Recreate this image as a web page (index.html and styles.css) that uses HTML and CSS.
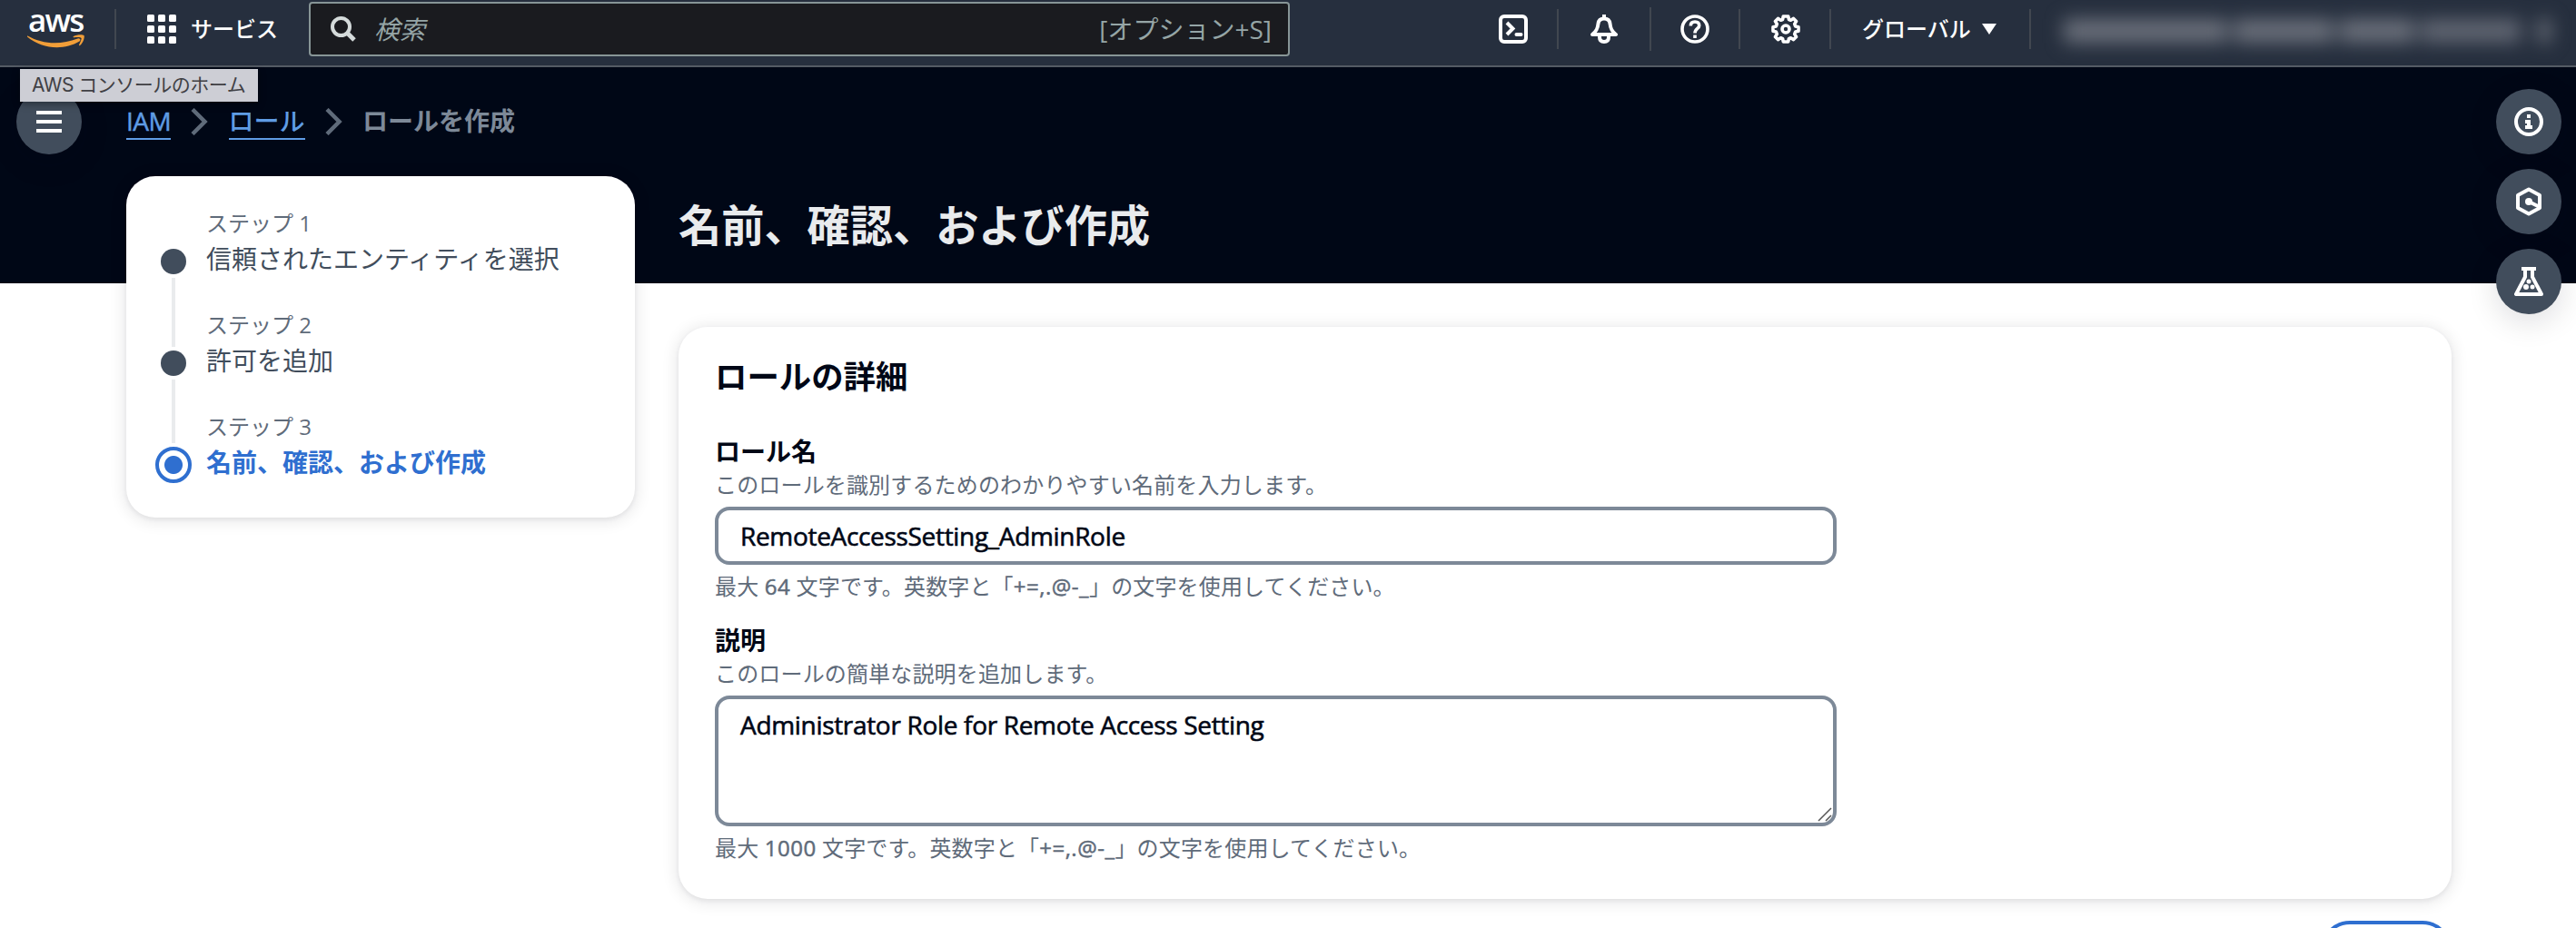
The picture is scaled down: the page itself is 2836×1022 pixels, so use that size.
FILE: index.html
```html
<!DOCTYPE html>
<html lang="ja">
<head>
<meta charset="utf-8">
<title>ロールを作成 | IAM</title>
<link rel="stylesheet" href="styles.css">
</head>
<body>
<header class="topnav">
  <a class="logo" aria-label="AWS">
    <span class="logo-word">aws</span>
    <svg class="logo-smile" width="64" height="16" viewBox="0 0 64 16" fill="#f19e38"><path d="M0.500 1.500C17 11 37 11.500 55.500 4.500C58 3.500 59.500 6 57.500 7.500C40 18 16 16 0 2.500C-.300 1.800 0 1.200 .500 1.500Z"/><path d="M51 2C54 0 61 -.500 62.500 1C63.500 3 61.500 9.500 58 12C57 12.500 56.700 12 57.200 11C58.600 8 60 5 59.500 4C58.500 2.500 54.500 3 51.500 3.300C50.500 3.300 50.200 2.600 51 2Z"/></svg>
  </a>
  <span class="sep sep-logo"></span>
  <button class="services">
    <svg width="32" height="32" viewBox="0 0 32 32" fill="#fff"><rect width="8" height="8" rx="1.500"/><rect x="12" width="8" height="8" rx="1.500"/><rect x="24" width="8" height="8" rx="1.500"/><rect y="12" width="8" height="8" rx="1.500"/><rect x="12" y="12" width="8" height="8" rx="1.500"/><rect x="24" y="12" width="8" height="8" rx="1.500"/><rect y="24" width="8" height="8" rx="1.500"/><rect x="12" y="24" width="8" height="8" rx="1.500"/><rect x="24" y="24" width="8" height="8" rx="1.500"/></svg>
    <span>サービス</span>
  </button>
  <div class="search">
    <svg width="28" height="28" viewBox="0 0 28 28" fill="none" stroke="#d5dbdb" stroke-width="4"><circle cx="11.500" cy="11.500" r="9.500"/><path d="M18 18L26 26" stroke-width="5"/></svg>
    <span class="search-hint">検索</span>
    <span class="search-key">[オプション+S]</span>
  </div>
  <nav class="tools">
    <span class="tool"><svg width="32" height="32" viewBox="0 0 32 32" fill="none" stroke="#fff" stroke-width="4"><rect x="2" y="2" width="28" height="28" rx="4"/><path d="M9 9L15.500 15.500L9 22"/><path d="M19.500 22H24.500" stroke-linecap="round"/></svg></span>
    <span class="sep"></span>
    <span class="tool tool-bell"><svg width="32" height="32" viewBox="0 0 32 32" fill="none" stroke="#fff" stroke-width="4" stroke-linejoin="round"><path d="M3 22C8 18 9 15 9.500 10C10 6 13 4.500 16 4.500S22 6 22.500 10C23 15 24 18 29 22Z"/><path d="M16 0V4"/><path d="M11 23V25C11 28.500 13 30 16 30S21 28.500 21 25V23"/></svg></span>
    <span class="sep sep-tall"></span>
    <span class="tool tool-help"><svg width="32" height="32" viewBox="0 0 32 32" fill="none" stroke="#fff" stroke-width="3.600"><circle cx="16" cy="16" r="14"/><path d="M11.300 12.500C11.300 9.500 13.200 8 16 8S20.700 9.500 20.700 12.200C20.700 15.600 16 15.300 16 20.500"/><path d="M16 22.500V26"/></svg></span>
    <span class="sep"></span>
    <span class="tool"><svg width="32" height="32" viewBox="0 0 32 32" fill="none" stroke="#fff" stroke-width="3.600"><path stroke-linejoin="round" d="M13.300 2H18.700L19.500 5.500L21.500 6.300L24.600 4.400L27.600 7.400L25.700 10.500L26.600 13L30 13.700V18.300L26.600 19L25.700 21.500L27.600 24.600L24.600 27.600L21.500 25.700L19.400 26.600L18.700 30H13.300L12.600 26.600L10.500 25.700L7.400 27.600L4.400 24.600L6.300 21.500L5.400 19L2 18.300V13.700L5.400 13L6.300 10.500L4.400 7.400L7.400 4.400L10.500 6.300L12.500 5.500Z"/><circle cx="16" cy="16" r="4"/></svg></span>
    <span class="sep"></span>
  </nav>
  <button class="region"><span>グローバル</span><i class="caret"></i></button>
  <span class="sep"></span>
  <div class="account"><i class="m1"></i><i class="m2"></i><i class="m3"></i><i class="m4"></i><i class="m5"></i></div>
</header>
<div class="tooltip">AWS コンソールのホーム</div>
<div class="page">
  <div class="left-rail">
    <button class="round"><svg width="28" height="24" viewBox="0 0 28 24" fill="#fff"><path d="M0 0H28V4H0ZM0 10H28V14H0ZM0 20H28V24H0Z"/></svg></button>
  </div>
  <nav class="crumbs">
    <a class="crumb crumb-iam">IAM</a>
    <svg class="chevron" width="20" height="30" viewBox="0 0 20 30"><path d="M2 1.500L15.500 15L2 28.500"/></svg>
    <a class="crumb">ロール</a>
    <svg class="chevron" width="20" height="30" viewBox="0 0 20 30"><path d="M2 1.500L15.500 15L2 28.500"/></svg>
    <span class="crumb-current">ロールを作成</span>
  </nav>
  <aside class="right-rail">
    <button class="round"><svg width="32" height="32" viewBox="0 0 32 32" fill="none" stroke="#fff" stroke-width="4"><circle cx="16" cy="16" r="14"/><path d="M14 10H18M12 16H16V22M12 22H20" /></svg></button>
    <button class="round"><svg width="32" height="32" viewBox="0 0 32 32" fill="none" stroke="#fff" stroke-width="4"><path stroke-linejoin="round" d="M16 2.400L28 9V23L16 29.600L4 23V9Z"/><circle cx="16" cy="16" r="4" fill="#fff" stroke="none"/><path d="M16 16L27 21.500"/></svg></button>
    <button class="round"><svg width="32" height="32" viewBox="0 0 32 32" fill="none" stroke="#fff" stroke-width="4"><path d="M8 2H24"/><path stroke-linejoin="round" d="M12 2V11L2 30H30L20 11V2"/><g fill="#fff" stroke="none"><circle cx="16" cy="16" r="2.500"/><circle cx="13" cy="22" r="3"/><circle cx="20" cy="22" r="2.500"/></g></svg></button>
  </aside>
  <ol class="steps">
    <li class="step"><span class="dot"></span><span class="line"></span><div><p class="step-no">ステップ 1</p><p class="step-name">信頼されたエンティティを選択</p></div></li>
    <li class="step"><span class="dot"></span><span class="line"></span><div><p class="step-no">ステップ 2</p><p class="step-name">許可を追加</p></div></li>
    <li class="step step-active"><span class="dot"></span><div><p class="step-no">ステップ 3</p><p class="step-name">名前、確認、および作成</p></div></li>
  </ol>
  <main class="content">
    <h1>名前、確認、および作成</h1>
    <section class="card">
      <h2>ロールの詳細</h2>
      <div class="field">
        <label>ロール名</label>
        <p class="desc">このロールを識別するためのわかりやすい名前を入力します。</p>
        <div class="box">RemoteAccessSetting_AdminRole</div>
        <p class="desc hint">最大 <span class="num">64</span> 文字です。英数字と「<span class="num">+=,.@-_</span>」の文字を使用してください。</p>
      </div>
      <div class="field">
        <label>説明</label>
        <p class="desc">このロールの簡単な説明を追加します。</p>
        <div class="box area">Administrator Role for Remote Access Setting<svg class="grip" width="16" height="16" viewBox="0 0 16 16"><path d="M1 15L15 1M9 15L15 9"/></svg></div>
        <p class="desc hint">最大 <span class="num">1000</span> 文字です。英数字と「<span class="num">+=,.@-_</span>」の文字を使用してください。</p>
      </div>
    </section>
    <div class="next"><button class="edit" aria-label="編集"></button></div>
  </main>
</div>
</body>
</html>
```
FILE: styles.css
```css
* { box-sizing: border-box; }
html, body { height: 1022px; overflow: hidden; }
body {
  margin: 0;
  background: #fff;
  color: #000716;
  font-family: "Open Sans", "Noto Sans CJK JP", sans-serif;
  font-size: 28px;
}
button { font: inherit; color: inherit; background: none; border: 0; padding: 0; }
h1, h2, p, ol { margin: 0; padding: 0; }
svg { display: block; flex: none; }

.topnav {
  display: flex;
  height: 74px;
  padding-bottom: 8px;
  align-items: center;
  background: #262f3e;
  border-bottom: 2px solid #545b64;
  color: #fff;
}
.logo { width: 96px; padding-left: 30px; display: flex; flex-direction: column; align-items: flex-start; }
.logo-word { font-family: "Open Sans", sans-serif; font-weight: 600; font-size: 35px; line-height: 30px; letter-spacing: -1.8px; margin: -4px 0 0 1px; height: 31px; }
.sep { width: 2px; height: 44px; background: #414750; flex: none; }
.sep-tall { height: 48px; }
.sep-logo { margin-left: 30px; }
.services { display: flex; align-items: center; gap: 16px; margin-left: 34px; width: 178px; font-size: 24px; line-height: 36px; font-weight: 500; white-space: nowrap; }
.search {
  display: flex;
  align-items: center;
  width: 1080px;
  height: 60px;
  padding: 0 18px 0 22px;
  background: #1a1b1f;
  border: 2px solid #879596;
  border-radius: 4px;
  color: #95a5a6;
}
.search-hint { margin-left: 20px; font-style: italic; line-height: 36px; }
.search-key { margin-left: auto; line-height: 36px; }
.tools { display: flex; align-items: center; margin-left: 230px; height: 64px; }
.tool { padding: 0 32px 0 34px; }
.tool:first-child { padding: 0 32px 0 0; }
.tool-bell { padding: 0 34px; }
.tool-help { padding: 0 32px; }
.region { display: flex; align-items: center; gap: 12px; margin-left: 34px; width: 184px; font-size: 24px; line-height: 36px; font-weight: 500; }
.caret { border: 8px solid transparent; border-top: 12px solid #fff; border-bottom: 0; }
.account { display: flex; gap: 7px; margin: 3px 0 0 36px; filter: blur(10px); }
.account i { height: 26px; background: #6a6f7a; }
.m1 { width: 180px; }
.m2 { width: 110px; }
.m3 { width: 82px; }
.m4 { width: 110px; opacity: .85; }
.m5 { width: 14px; margin-left: 12px; }

.tooltip {
  position: absolute;
  left: 22px;
  top: 76px;
  width: 262px;
  height: 36px;
  padding-left: 13px;
  background: #cdced5;
  color: #404044;
  font: 21px/35px Inter, "Noto Sans CJK JP", sans-serif;
  letter-spacing: -0.5px;
  white-space: nowrap;
  box-shadow: 0 2px 8px rgba(0, 0, 0, .4);
  z-index: 3;
}

.page {
  display: grid;
  grid-template-columns: 139px 560px 2000px 137px;
  grid-template-rows: 120px 828px;
  background: linear-gradient(#000716 238px, #fff 238px);
}
.left-rail { padding: 24px 0 0 18px; }
.round {
  display: flex;
  align-items: center;
  justify-content: center;
  width: 72px;
  height: 72px;
  border-radius: 50%;
  background: #414d5c;
  box-shadow: 0 8px 32px 2px rgba(0, 7, 22, .12);
}
.crumbs { grid-column: 2 / 4; display: flex; align-items: center; }
.crumb { color: #5f9ce4; line-height: 36px; height: 39px; border-bottom: 2px solid #5f9ce4; font-weight: 500; }
.crumb-iam { width: 49px; letter-spacing: -0.5px; -webkit-text-stroke: .5px currentColor; }
.chevron { margin: 0 21.500px 0 22px; fill: none; stroke: #5f6b7a; stroke-width: 4.500; }
.crumb-current { color: #7d8998; font-weight: 700; line-height: 36px; height: 39px; }
.right-rail { grid-column: 4; grid-row: 1 / 3; padding: 24px 0 0 49px; display: flex; flex-direction: column; gap: 16px; }

.steps {
  grid-column: 2;
  grid-row: 2;
  align-self: start;
  height: 376px;
  padding: 34px 30px 0 32px;
  list-style: none;
  background: #fff;
  border-radius: 32px;
  box-shadow: 0 2px 4px 1px rgba(0, 7, 22, .05), 0 2px 16px 4px rgba(0, 7, 22, .08);
}
.step { display: grid; grid-template-columns: 40px 1fr; grid-template-rows: 46px 28px 38px; column-gap: 16px; }
.step > div { grid-column: 2; grid-row: 1 / 4; }
.dot { grid-row: 2; width: 28px; height: 28px; margin: 0 6px; border-radius: 50%; background: #414d5c; }
.line { grid-row: 3; width: 4px; height: 76px; margin: 4px 18px 0; background: #e9ebed; }
.step:nth-child(2) .line { height: 70px; }
.step-active .dot { width: 40px; height: 40px; margin: -6px 0; border: 4px solid #2f6fd0; background: radial-gradient(circle, #2f6fd0 9.500px, #fff 10.500px); }
.step-no { font-size: 24px; line-height: 36px; color: #5f6b7a; }
.step-name { line-height: 42px; color: #414d5c; white-space: nowrap; }
.step-active .step-name { color: #2f6fd0; font-weight: 700; }

.content { grid-column: 3; grid-row: 2; padding-left: 48px; }
h1 { font-size: 47.200px; line-height: 108px; margin-bottom: 58px; color: #e9ebed; font-weight: 700; }
.card {
  height: 630px;
  padding: 31px 40px 38px;
  background: #fff;
  border-radius: 32px;
  box-shadow: 0 2px 4px 1px rgba(0, 7, 22, .05), 0 2px 16px 4px rgba(0, 7, 22, .08);
}
h2 { font-size: 35.400px; line-height: 46px; font-weight: 700; margin-bottom: 43px; }
.field { margin-bottom: 24px; width: 1235px; }
label { display: block; line-height: 34px; padding-bottom: 2px; font-weight: 700; }
.desc { font-size: 24px; line-height: 36px; letter-spacing: .16px; color: #5f6b7a; white-space: nowrap; }
.num { letter-spacing: .5px; -webkit-text-stroke: .5px currentColor; }
.hint { margin-top: 6px; }
.box {
  position: relative;
  height: 64px;
  margin-top: 6px;
  padding: 8px 24px;
  border: 4px solid #7d8998;
  border-radius: 16px;
  line-height: 40px;
  letter-spacing: -.32px;
  -webkit-text-stroke: .6px currentColor;
}
.area { height: 144px; }
.grip { position: absolute; right: 1px; bottom: 1px; stroke: #555; stroke-width: 1.500; }
.next { display: flex; justify-content: flex-end; margin-top: 24px; height: 8px; overflow: hidden; }
.edit { width: 144px; height: 64px; border: 4px solid #2f6fd0; border-radius: 32px; }
```
